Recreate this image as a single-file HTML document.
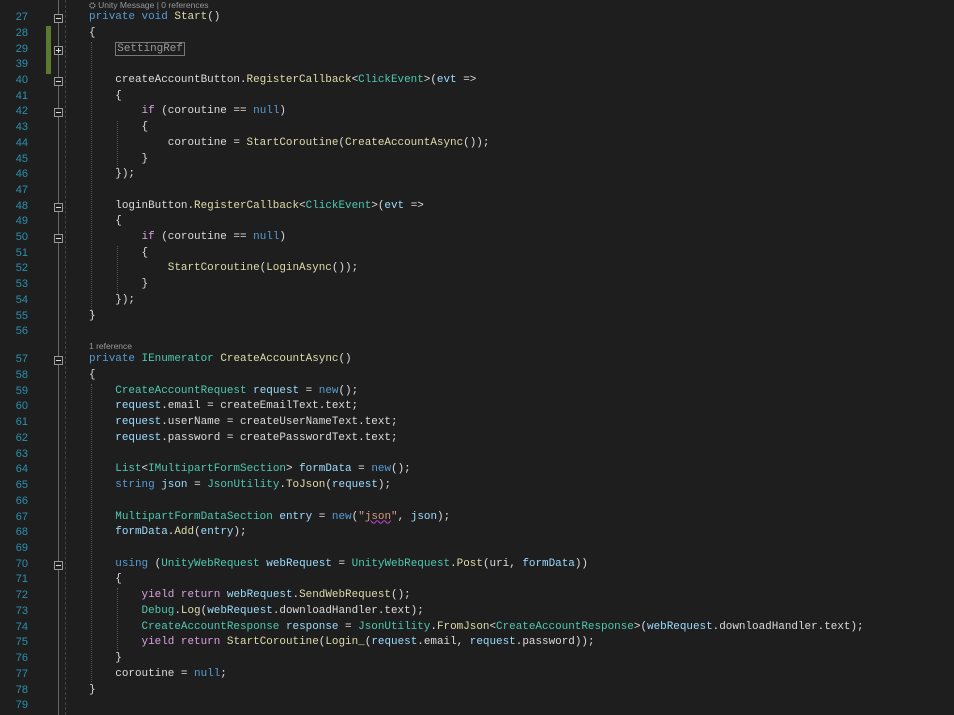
<!DOCTYPE html>
<html><head><meta charset="utf-8"><style>
body{margin:0;width:954px;height:715px;background:#1e1e1e;overflow:hidden;position:relative;font-family:"Liberation Mono",monospace;font-size:10.95px;color:#dcdcdc}
.r{position:absolute;left:0;height:15.7px;line-height:15.7px;white-space:pre;width:954px}
.n{position:absolute;left:0;width:28px;text-align:right;color:#2b91af;font-size:11px;font-family:"Liberation Sans",sans-serif}
.c{position:absolute;left:89px}
.k{color:#569cd6}.p{color:#d8a0df}.t{color:#4ec9b0}.m{color:#dcdcaa}.v{color:#9cdcfe}.s{color:#d69d85}
.fb{position:absolute;left:54px;width:7px;height:7px;border:1px solid #999;background:#1e1e1e}
.fb::after{content:"";position:absolute;left:1px;top:3px;width:5px;height:1px;background:#ddd}
.pl::before{content:"";position:absolute;left:3px;top:1px;width:1px;height:5px;background:#ddd}
.lens{position:absolute;left:89px;font-family:"Liberation Sans",sans-serif;font-size:8.5px;color:#999}
.g{position:absolute;border-left:1px dotted #555}
</style></head><body>
<div style="position:absolute;left:58px;top:0;width:1px;height:715px;background:#666"></div>
<div style="position:absolute;left:65px;top:0;height:715px;border-left:1px dashed #444"></div>
<div style="position:absolute;left:46px;top:26px;width:5px;height:48px;background:#5a7a30"></div>
<div class="lens" style="top:0">⛭ Unity Message | 0 references</div>
<div class="lens" style="top:341px">1 reference</div>
<div class="g" style="left:91px;top:42px;height:274px"></div>
<div class="g" style="left:117px;top:121px;height:47px"></div>
<div class="g" style="left:117px;top:246px;height:47px"></div>
<div class="g" style="left:91px;top:384px;height:298px"></div>
<div class="g" style="left:117px;top:588px;height:62px"></div>

<div id="a"></div>
<script>
const A=[
["27",1,'<span class="k">private</span> <span class="k">void</span> <span class="m">Start</span>()'],
["28",0,'{'],
["29",2,'    <span style="border:1px solid #777;color:#999;padding:0 1px">SettingRef</span>'],
["39",0,''],
["40",1,'    createAccountButton.<span class="m">RegisterCallback</span>&lt;<span class="t">ClickEvent</span>&gt;(<span class="v">evt</span> =&gt;'],
["41",0,'    {'],
["42",1,'        <span class="p">if</span> (coroutine == <span class="k">null</span>)'],
["43",0,'        {'],
["44",0,'            coroutine = <span class="m">StartCoroutine</span>(<span class="m">CreateAccountAsync</span>());'],
["45",0,'        }'],
["46",0,'    });'],
["47",0,''],
["48",1,'    loginButton.<span class="m">RegisterCallback</span>&lt;<span class="t">ClickEvent</span>&gt;(<span class="v">evt</span> =&gt;'],
["49",0,'    {'],
["50",1,'        <span class="p">if</span> (coroutine == <span class="k">null</span>)'],
["51",0,'        {'],
["52",0,'            <span class="m">StartCoroutine</span>(<span class="m">LoginAsync</span>());'],
["53",0,'        }'],
["54",0,'    });'],
["55",0,'}'],
["56",0,'']];
const B=[
["57",1,'<span class="k">private</span> <span class="t">IEnumerator</span> <span class="m">CreateAccountAsync</span>()'],
["58",0,'{'],
["59",0,'    <span class="t">CreateAccountRequest</span> <span class="v">request</span> = <span class="k">new</span>();'],
["60",0,'    <span class="v">request</span>.email = createEmailText.text;'],
["61",0,'    <span class="v">request</span>.userName = createUserNameText.text;'],
["62",0,'    <span class="v">request</span>.password = createPasswordText.text;'],
["63",0,''],
["64",0,'    <span class="t">List</span>&lt;<span class="t">IMultipartFormSection</span>&gt; <span class="v">formData</span> = <span class="k">new</span>();'],
["65",0,'    <span class="k">string</span> <span class="v">json</span> = <span class="t">JsonUtility</span>.<span class="m">ToJson</span>(<span class="v">request</span>);'],
["66",0,''],
["67",0,'    <span class="t">MultipartFormDataSection</span> <span class="v">entry</span> = <span class="k">new</span>(<span class="s">"<span style="text-decoration:underline wavy #b040c0">json</span>"</span>, <span class="v">json</span>);'],
["68",0,'    <span class="v">formData</span>.<span class="m">Add</span>(<span class="v">entry</span>);'],
["69",0,''],
["70",1,'    <span class="k">using</span> (<span class="t">UnityWebRequest</span> <span class="v">webRequest</span> = <span class="t">UnityWebRequest</span>.<span class="m">Post</span>(uri, <span class="v">formData</span>))'],
["71",0,'    {'],
["72",0,'        <span class="p">yield</span> <span class="p">return</span> <span class="v">webRequest</span>.<span class="m">SendWebRequest</span>();'],
["73",0,'        <span class="t">Debug</span>.<span class="m">Log</span>(<span class="v">webRequest</span>.downloadHandler.text);'],
["74",0,'        <span class="t">CreateAccountResponse</span> <span class="v">response</span> = <span class="t">JsonUtility</span>.<span class="m">FromJson</span>&lt;<span class="t">CreateAccountResponse</span>&gt;(<span class="v">webRequest</span>.downloadHandler.text);'],
["75",0,'        <span class="p">yield</span> <span class="p">return</span> <span class="m">StartCoroutine</span>(<span class="m">Login_</span>(<span class="v">request</span>.email, <span class="v">request</span>.password));'],
["76",0,'    }'],
["77",0,'    coroutine = <span class="k">null</span>;'],
["78",0,'}'],
["79",0,'']];
let h='';
function blk(L,top,lh){L.forEach((l,i)=>{const y=top+i*lh;
h+=`<div class="r" style="top:${y}px"><span class="n">${l[0]}</span>${l[1]?`<span class="fb ${l[1]==2?'pl':''}" style="top:4px"></span>`:''}<span class="c">${l[2]}</span></div>`;});}
blk(A,10.2,15.7);blk(B,352.2,15.73);
document.getElementById('a').innerHTML=h;
</script>
</body></html>
